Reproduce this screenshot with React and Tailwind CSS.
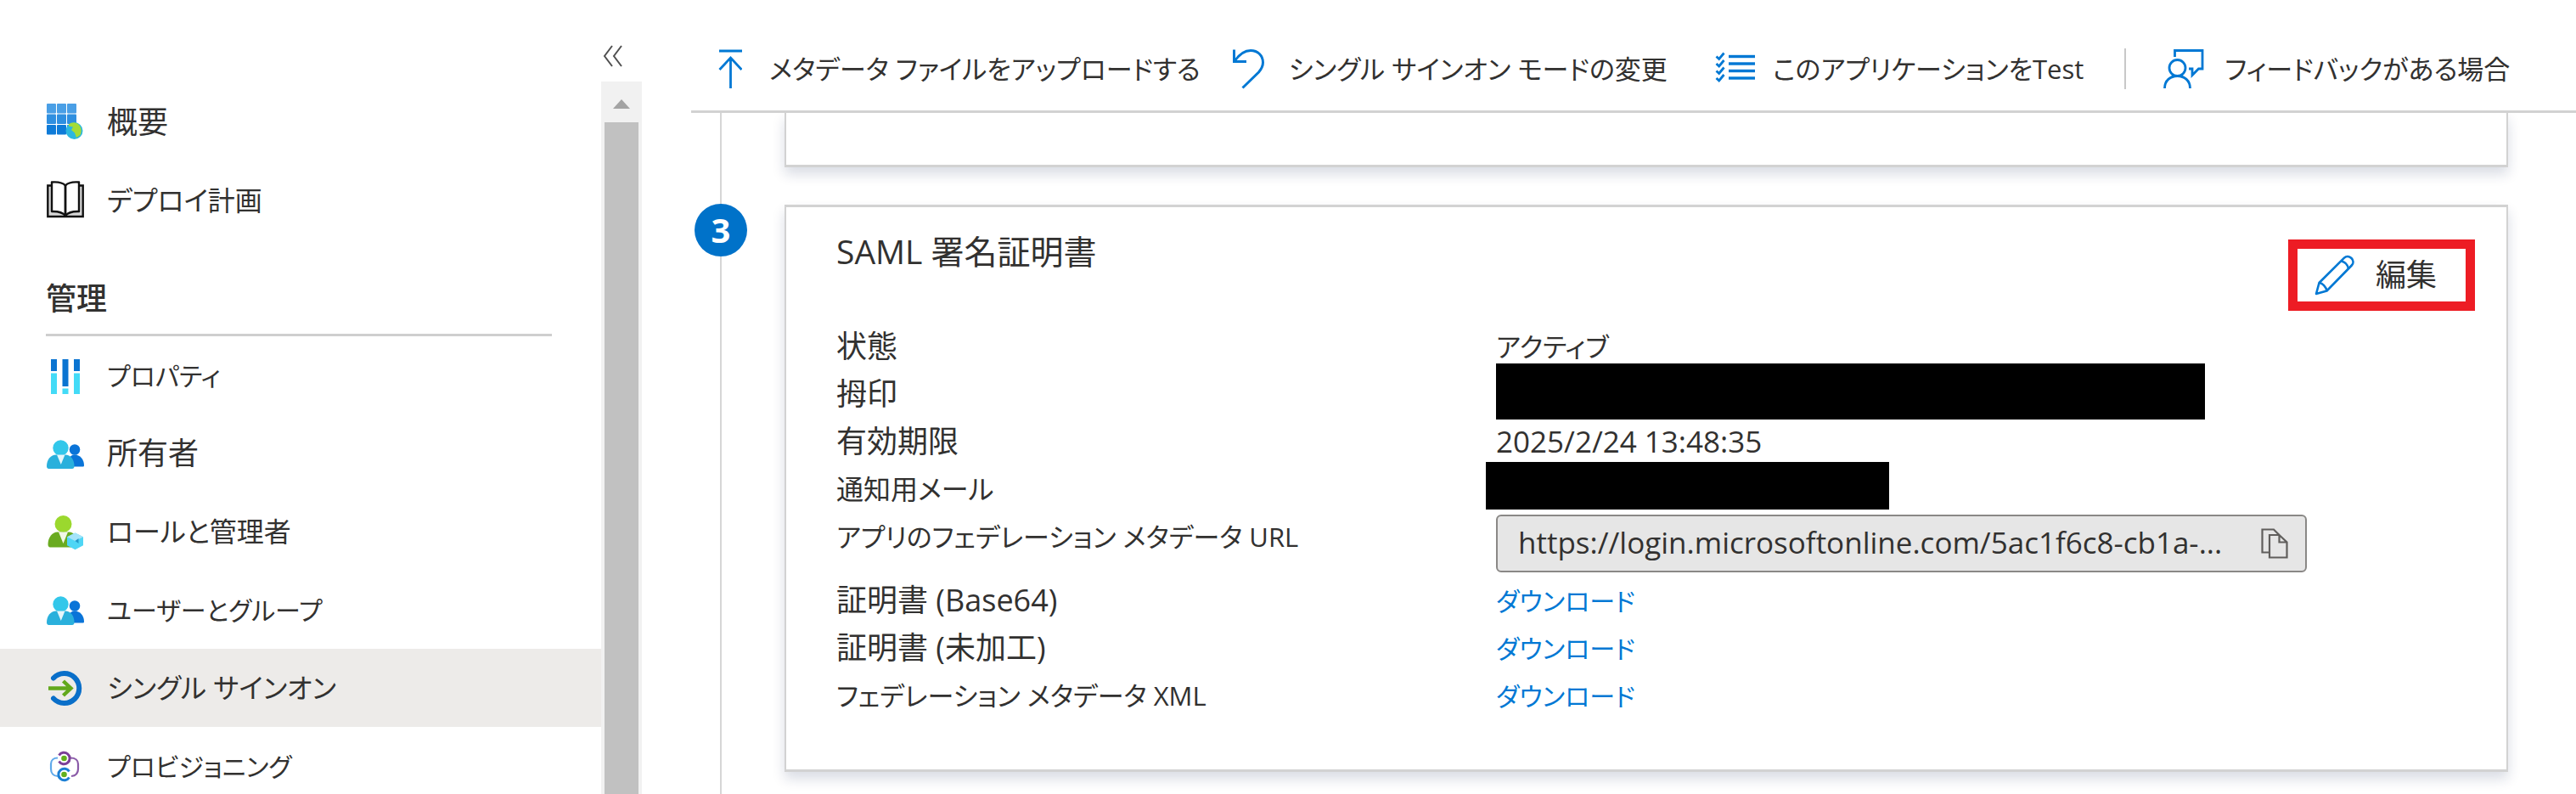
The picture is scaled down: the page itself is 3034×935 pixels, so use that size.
import React from "react";

const FONT =
  "font-['Open_Sans','Noto_Sans_CJK_JP',sans-serif] [font-feature-settings:'palt']";

function Icon({ className = "size-[46px]", viewBox = "0 0 46 46", children }) {
  return (
    <svg className={`shrink-0 ${className}`} viewBox={viewBox} fill="none" aria-hidden="true">
      {children}
    </svg>
  );
}

function OverviewIcon() {
  const shades = ["#4a9fe6", "#2f8fe0", "#0f7bd8"];
  return (
    <Icon>
      {[0, 1, 2].map((r) =>
        [0, 1, 2].map((c) => (
          <rect key={`${r}${c}`} x={1 + c * 12} y={1 + r * 12.5} width="11" height="11.5" rx="1" fill={shades[r]} />
        ))
      )}
      <circle cx="33.5" cy="33" r="10" fill="#2cb7e0" />
      <path d="M27 25.500c4-3.500 9-2.800 12 .5 3 3.500 3.500 8 1.500 12l-4.500 3-2-5.500-4-3.500 2-3.500-5-1z" fill="#a4dc37" />
    </Icon>
  );
}

function BookIcon() {
  return (
    <Icon>
      <path d="M7 5.500H2.300V42h41.400V5.500H39" fill="#d6d6d6" stroke="#111" strokeWidth="2.400" />
      <path d="M7 1.500c7-.5 13 .5 16 4 3-3.500 9-4.500 16-4V36c-7-.3-13 1.500-16 5-3-3.500-9-5.300-16-5z" fill="#fff" stroke="#111" strokeWidth="2.400" strokeLinejoin="round" />
      <path d="M23 5.500V41" stroke="#111" strokeWidth="2.800" />
    </Icon>
  );
}

function PropertiesIcon() {
  return (
    <Icon>
      <path d="M6 4h7v14H6zM19.500 4h7v32h-7zM33 4h7v14h-7z" fill="#0a74d1" />
      <path d="M6 20.500h7V45H6zM19.500 38.500h7V45h-7zM33 20.500h7V45h-7z" fill="#43dbf7" />
    </Icon>
  );
}

function PeopleIcon() {
  return (
    <Icon>
      <circle cx="34" cy="18.500" r="6.300" fill="#0a74d8" />
      <path d="M26 36c0-7 3-11.500 8-11.500 6 0 11 5 11 12.500 0 1-.6 1.500-1.500 1.500H28z" fill="#0a74d8" />
      <circle cx="17.500" cy="16.500" r="9.200" fill="#33c7ea" />
      <path d="M1 38c0-8 5-13.500 11-13.500h11c6 0 10.500 5.500 10.500 13.500 0 2-1 3-2.500 3H3.500C2 41 1 40 1 38z" fill="#2ab0dc" />
      <path d="M13 24.500h9.500L17.800 36z" fill="#e6f6fb" />
    </Icon>
  );
}

function RolesIcon() {
  return (
    <Icon>
      <circle cx="20.500" cy="14" r="10" fill="#9bd82e" />
      <path d="M2.500 38c0-8 5-14.500 11-14.500h14c6 0 10 6.500 10 14.500 0 2-1 3.500-2.500 3.500H5c-1.500 0-2.500-1.500-2.500-3.500z" fill="#6aab20" />
      <path d="M15 23.500h11L20.500 37z" fill="#f1f7e6" />
      <path d="M34.500 24.500l9.500 4.800v10l-9.500 5-9.500-5v-10z" fill="#4fd6f5" />
      <path d="M34.500 24.500l9.500 4.800-9.500 4.700-9.500-4.700z" fill="#a5e4fa" />
      <path d="M34.500 34l4-3v6z" fill="#2498c9" />
    </Icon>
  );
}

function SignOnIcon() {
  return (
    <Icon>
      <path d="M9 11.500a17.500 17.500 0 1 1 0 24" stroke="#0a6fc9" strokeWidth="6" strokeLinecap="round" />
      <path d="M3 23.500h26M20.500 15l9 8.500-9 8.500" stroke="#62a81c" strokeWidth="4.400" />
    </Icon>
  );
}

function ProvisioningIcon() {
  return (
    <Icon>
      <path d="M14 13.500c-5 0-8 3-8 7v6c0 5 3 8.500 8 8.500" stroke="#5fa9ea" strokeWidth="2.200" />
      <path d="M29 13.500c6 0 9 3 9 7v6c0 5-3 8-8 8.500" stroke="#8a5aa8" strokeWidth="2.200" />
      <path d="M15.500 10.500a6.800 6.800 0 1 1 0 7" stroke="#7b3f98" strokeWidth="3" />
      <circle cx="21.500" cy="14" r="3.300" fill="#62b01c" />
      <path d="M27.500 29.500a6.800 6.800 0 1 0 0 7" stroke="#1b7fd4" strokeWidth="3" />
      <circle cx="21.500" cy="33" r="3.300" fill="#62b01c" />
    </Icon>
  );
}

function UploadIcon() {
  return (
    <Icon className="h-12 w-7" viewBox="0 0 28 48">
      <path d="M1 3h27M14.500 47V11M1.500 25l13-14 13 14" stroke="#0078d4" strokeWidth="2.800" />
    </Icon>
  );
}

function UndoIcon() {
  return (
    <Icon className="h-12 w-10" viewBox="0 0 40 48">
      <path d="M3.500 1.500v14H18" stroke="#0078d4" strokeWidth="3" />
      <path d="M4 15C11 5 17 2.500 23 2.500c8.500 0 14.500 6 14.500 14 0 5-2 8-5 11.500L13.500 46.500" stroke="#0078d4" strokeWidth="3" />
    </Icon>
  );
}

function ChecklistIcon() {
  return (
    <Icon className="h-12 w-12" viewBox="0 0 48 48">
      {[9.5, 18, 26.5, 35].map((y) => (
        <g key={y} stroke="#0078d4">
          <path d={`M16 ${y}h31`} strokeWidth="3.400" />
          <path d={`M1.500 ${y}l3.200 3L10.500 ${y - 4}`} strokeWidth="2.800" />
        </g>
      ))}
    </Icon>
  );
}

function FeedbackIcon() {
  return (
    <Icon className="h-12 w-12" viewBox="0 0 48 48">
      <g stroke="#0078d4" strokeWidth="2.800">
        <circle cx="16.500" cy="23" r="9.500" />
        <path d="M1.500 47c0-9 6.500-14.500 15-14.500s15 5.500 15 14.500" />
        <path d="M13.500 10V2.500H46V24h-4.500L34 31.500V24h-4" />
      </g>
    </Icon>
  );
}

function PencilIcon() {
  return (
    <Icon className="size-12" viewBox="0 0 48 48">
      <g stroke="#0078d4" strokeWidth="2.600" strokeLinejoin="round">
        <path d="M2 46l3.500-13L35 3.700c2.500-2.400 6-2.200 8.500.3s2.700 6 .3 8.500L14.500 42.500z" />
        <path d="M5.500 33c4 .5 8 4.500 9 9.500M31.500 7.500c4 .8 7.500 4.200 8.500 8.800" />
      </g>
    </Icon>
  );
}

function CopyIcon() {
  return (
    <Icon className="h-9 w-8" viewBox="0 0 32 36">
      <g stroke="#605e5c" strokeWidth="2.200">
        <path d="M10 28.500H1.500V1.500H15l6.500 6.500" />
        <path d="M10 8h11.500l9 8.500V34.500H10zM21.500 8v8.500h9" />
      </g>
    </Icon>
  );
}

function NavItem({ icon, label, size = "text-[36px]", active = false }) {
  return (
    <li>
      <a
        href="#"
        aria-current={active ? "page" : undefined}
        className={`flex h-[92px] items-center gap-[26px] pl-[54px] whitespace-nowrap ${size} ${active ? "bg-[#edebe9]" : ""}`}
      >
        {icon}
        {label}
      </a>
    </li>
  );
}

function Sidebar() {
  return (
    <aside className="flex w-[756px] shrink-0 flex-col">
      <div className="flex h-24 items-end justify-end pr-[22px] pb-4">
        <button type="button" aria-label="メニューを折りたたむ">
          <Icon className="h-7 w-6" viewBox="0 0 24 28">
            <path d="M11 2L2 14l9 12M22 2l-9 12 9 12" stroke="#505050" strokeWidth="2" />
          </Icon>
        </button>
      </div>
      <div className="flex min-h-0 flex-1">
        <nav className="flex-1 overflow-hidden pt-0.5">
          <ul>
            <NavItem icon={<OverviewIcon />} label="概要" />
            <NavItem icon={<BookIcon />} label="デプロイ計画" size="text-[32px]" />
          </ul>
          <h2 className="mr-[58px] ml-[54px] flex h-[114px] items-center border-b-3 border-[#cfcfcf] pt-7 text-[36px] font-medium">
            管理
          </h2>
          <ul>
            <NavItem icon={<PropertiesIcon />} label="プロパティ" size="text-[30px]" />
            <NavItem icon={<PeopleIcon />} label="所有者" />
            <NavItem icon={<RolesIcon />} label="ロールと管理者" size="text-[32px]" />
            <NavItem icon={<PeopleIcon />} label="ユーザーとグループ" size="text-[30px]" />
            <NavItem icon={<SignOnIcon />} label="シングル サインオン" size="text-[32px]" active />
            <NavItem icon={<ProvisioningIcon />} label="プロビジョニング" size="text-[30px]" />
          </ul>
        </nav>
        <div className="flex w-12 flex-col items-center bg-[#f1f1f1]">
          <svg className="h-12 w-5 shrink-0" viewBox="0 0 20 48" aria-hidden="true">
            <path d="M10 21l10 11H0z" fill="#a3a3a3" />
          </svg>
          <div className="w-10 flex-1 bg-[#c1c1c1]" />
        </div>
      </div>
    </aside>
  );
}

function Toolbar() {
  return (
    <div className="flex h-[133px] shrink-0 items-center border-b-3 border-[#d2d2d2] pt-8 pl-8 text-[31px] whitespace-nowrap">
      <button type="button" className="flex items-center gap-8">
        <UploadIcon />
        メタデータ ファイルをアップロードする
      </button>
      <button type="button" className="ml-9 flex items-center gap-7">
        <UndoIcon />
        シングル サインオン モードの変更
      </button>
      <button type="button" className="ml-14 flex items-center gap-5">
        <ChecklistIcon />
        このアプリケーションをTest
      </button>
      <div className="ml-12 h-12 w-0.5 bg-[#c8c8c8]" />
      <button type="button" className="ml-11 flex items-center gap-6">
        <FeedbackIcon />
        フィードバックがある場合
      </button>
    </div>
  );
}

function Row({ label, size = "text-[36px]", height = "h-14", children }) {
  return (
    <div className={`flex ${height}`}>
      <dt className={`flex h-14 w-[777px] shrink-0 items-center whitespace-nowrap ${size}`}>{label}</dt>
      <dd className="relative flex flex-1 items-center">{children}</dd>
    </div>
  );
}

function DownloadLink() {
  return (
    <a href="#" className="text-[30px] text-[#0078d4]">
      ダウンロード
    </a>
  );
}

const CARD =
  "border-x-2 border-y-3 border-[#d2d2d2] bg-white shadow-[0_8px_14px_rgba(20,40,90,0.16)]";

function CertificateCard() {
  return (
    <section className={`mt-11 h-[668px] pl-[59px] ${CARD}`}>
      <div className="flex h-[136px] items-start justify-between pr-[37px]">
        <h3 className="pt-[22px] text-[39px] leading-[60px]">SAML 署名証明書</h3>
        <button
          type="button"
          className="mt-[38px] flex h-[84px] w-[220px] items-center gap-6 border-[11px] border-[#ed1c24] pl-5 text-[36px] whitespace-nowrap"
        >
          <PencilIcon />
          編集
        </button>
      </div>
      <dl>
        <Row label="状態">
          <span className="text-[31px]">アクティブ</span>
        </Row>
        <Row label="拇印">
          <div className="absolute -top-2 left-0 h-[66px] w-[835px] bg-black" />
        </Row>
        <Row label="有効期限">
          <span className="text-[35px]">2025/2/24 13:48:35</span>
        </Row>
        <Row label="通知用メール" size="text-[32px]">
          <div className="absolute -top-1 -left-3 h-14 w-[475px] bg-black" />
        </Row>
        <Row label="アプリのフェデレーション メタデータ URL" size="text-[31px]" height="h-[75px]">
          <div className="mb-1 flex h-[68px] w-[955px] items-center justify-between rounded-md border-2 border-[#8a8886] bg-[#e6e6e6] pr-5 pl-6">
            <input
              readOnly
              aria-label="アプリのフェデレーション メタデータ URL"
              value="https://login.microsoftonline.com/5ac1f6c8-cb1a-..."
              className="min-w-0 flex-1 bg-transparent text-[35px] outline-none"
            />
            <button type="button" aria-label="コピー">
              <CopyIcon />
            </button>
          </div>
        </Row>
        <Row label="証明書 (Base64)">
          <DownloadLink />
        </Row>
        <Row label="証明書 (未加工)">
          <DownloadLink />
        </Row>
        <Row label="フェデレーション メタデータ XML" size="text-[31px]">
          <DownloadLink />
        </Row>
      </dl>
    </section>
  );
}

export default function App() {
  return (
    <div className={`flex h-screen overflow-hidden bg-white text-[#323130] ${FONT}`}>
      <Sidebar />
      <main className="ml-[58px] flex min-w-0 flex-1 flex-col">
        <Toolbar />
        <div className="flex min-h-0 flex-1 overflow-hidden">
          <div className="flex w-[70px] shrink-0 flex-col items-center">
            <div className="h-[107px] w-0.5 shrink-0 bg-[#d6d6d6]" />
            <div className="flex size-[62px] shrink-0 items-center justify-center rounded-full bg-[#0072c9] text-[40px] font-bold text-white">
              3
            </div>
            <div className="w-0.5 flex-1 bg-[#d6d6d6]" />
          </div>
          <div className="mr-20 ml-10 flex-1">
            <div className={`h-16 border-t-0 ${CARD}`} />
            <CertificateCard />
          </div>
        </div>
      </main>
    </div>
  );
}
